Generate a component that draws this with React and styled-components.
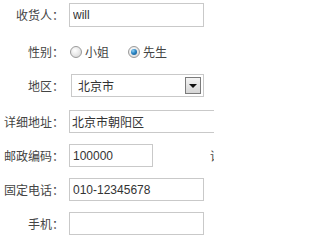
import styled, { createGlobalStyle } from 'styled-components';

const Global = createGlobalStyle`
  html, body {
    margin: 0;
    padding: 0;
    background: #fff;
    overflow: hidden;
  }
  body {
    font-family: "Noto Sans CJK SC", "Liberation Sans", sans-serif;
    font-size: 12px;
    color: #333;
  }
`;

const Form = styled.div`
  width: 214px;
  height: 240px;
  overflow: hidden;
  padding-top: 3px;
  box-sizing: border-box;
  display: flex;
  flex-direction: column;
  gap: 11px;
  white-space: nowrap;
`;

const Row = styled.div`
  display: flex;
  align-items: center;
  height: 23px;
  margin-bottom: ${p => p.$extra || 0}px;
`;

const Label = styled.label`
  width: 64px;
  flex: none;
  text-align: right;
  margin-right: 5px;
  color: #444;
  font-size: 12px;
  line-height: 23px;
`;

const Input = styled.input`
  box-sizing: border-box;
  flex: none;
  width: ${p => p.$w || 135}px;
  height: ${p => p.$h || 23}px;
  border: 1px solid #c9c9c9;
  padding: 0 3px;
  margin: 0;
  font-family: "Liberation Sans", "Noto Sans CJK SC", sans-serif;
  font-size: 12px;
  color: #333;
  background: #fff;
  outline: none;
  &.cn {
    font-family: "Noto Sans CJK SC", sans-serif;
    padding-left: 2px;
  }
`;

const RadioGroup = styled.div`
  display: flex;
  align-items: center;
`;

const RadioOpt = styled.span`
  display: flex;
  align-items: center;
  margin-right: 18px;
  color: #444;
`;

const Dot = styled.span`
  box-sizing: border-box;
  width: 12px;
  height: 12px;
  border-radius: 50%;
  border: 1px solid #9a9a9a;
  margin: 0 3px 0 1px;
  background: radial-gradient(circle at 40% 35%, #ffffff 0%, #e4e4e4 60%, #cfcfcf 100%);
  display: flex;
  align-items: center;
  justify-content: center;
  &::after {
    content: '';
    display: ${p => (p.$on ? 'block' : 'none')};
    width: 6px;
    height: 6px;
    border-radius: 50%;
    background: radial-gradient(circle at 35% 30%, #8fd0f5 0%, #2b86c4 45%, #0d4f85 100%);
  }
`;

const SelectBox = styled.div`
  box-sizing: border-box;
  width: 133px;
  height: 23px;
  margin-left: 2px;
  border: 1px solid #c9c9c9;
  display: flex;
  align-items: center;
  justify-content: space-between;
  padding: 0 2px 0 6px;
  font-size: 12px;
  color: #333;
`;

const DropBtn = styled.span`
  box-sizing: border-box;
  width: 16px;
  height: 17px;
  border: 1px solid #7b7b7b;
  background: linear-gradient(#f4f4f4, #d6d6d6);
  display: flex;
  align-items: center;
  justify-content: center;
  &::after {
    content: '';
    border-left: 4px solid transparent;
    border-right: 4px solid transparent;
    border-top: 4px solid #111;
    margin-top: 1px;
  }
`;

const Hint = styled.span`
  margin-left: 57px;
  color: #444;
`;

export default function App() {
  return (
    <>
      <Global />
      <Form>
        <Row $extra={3}>
          <Label>收货人：</Label>
          <Input defaultValue="will" $h={24} />
        </Row>
        <Row>
          <Label>性别：</Label>
          <RadioGroup>
            <RadioOpt><Dot />小姐</RadioOpt>
            <RadioOpt><Dot $on />先生</RadioOpt>
          </RadioGroup>
        </Row>
        <Row $extra={2}>
          <Label>地区：</Label>
          <SelectBox>
            北京市
            <DropBtn />
          </SelectBox>
        </Row>
        <Row>
          <Label>详细地址：</Label>
          <Input className="cn" defaultValue="北京市朝阳区" $w={200} />
        </Row>
        <Row>
          <Label>邮政编码：</Label>
          <Input defaultValue="100000" $w={84} />
          <Hint>请填写</Hint>
        </Row>
        <Row>
          <Label>固定电话：</Label>
          <Input defaultValue="010-12345678" />
        </Row>
        <Row>
          <Label>手机：</Label>
          <Input defaultValue="" />
        </Row>
      </Form>
    </>
  );
}
